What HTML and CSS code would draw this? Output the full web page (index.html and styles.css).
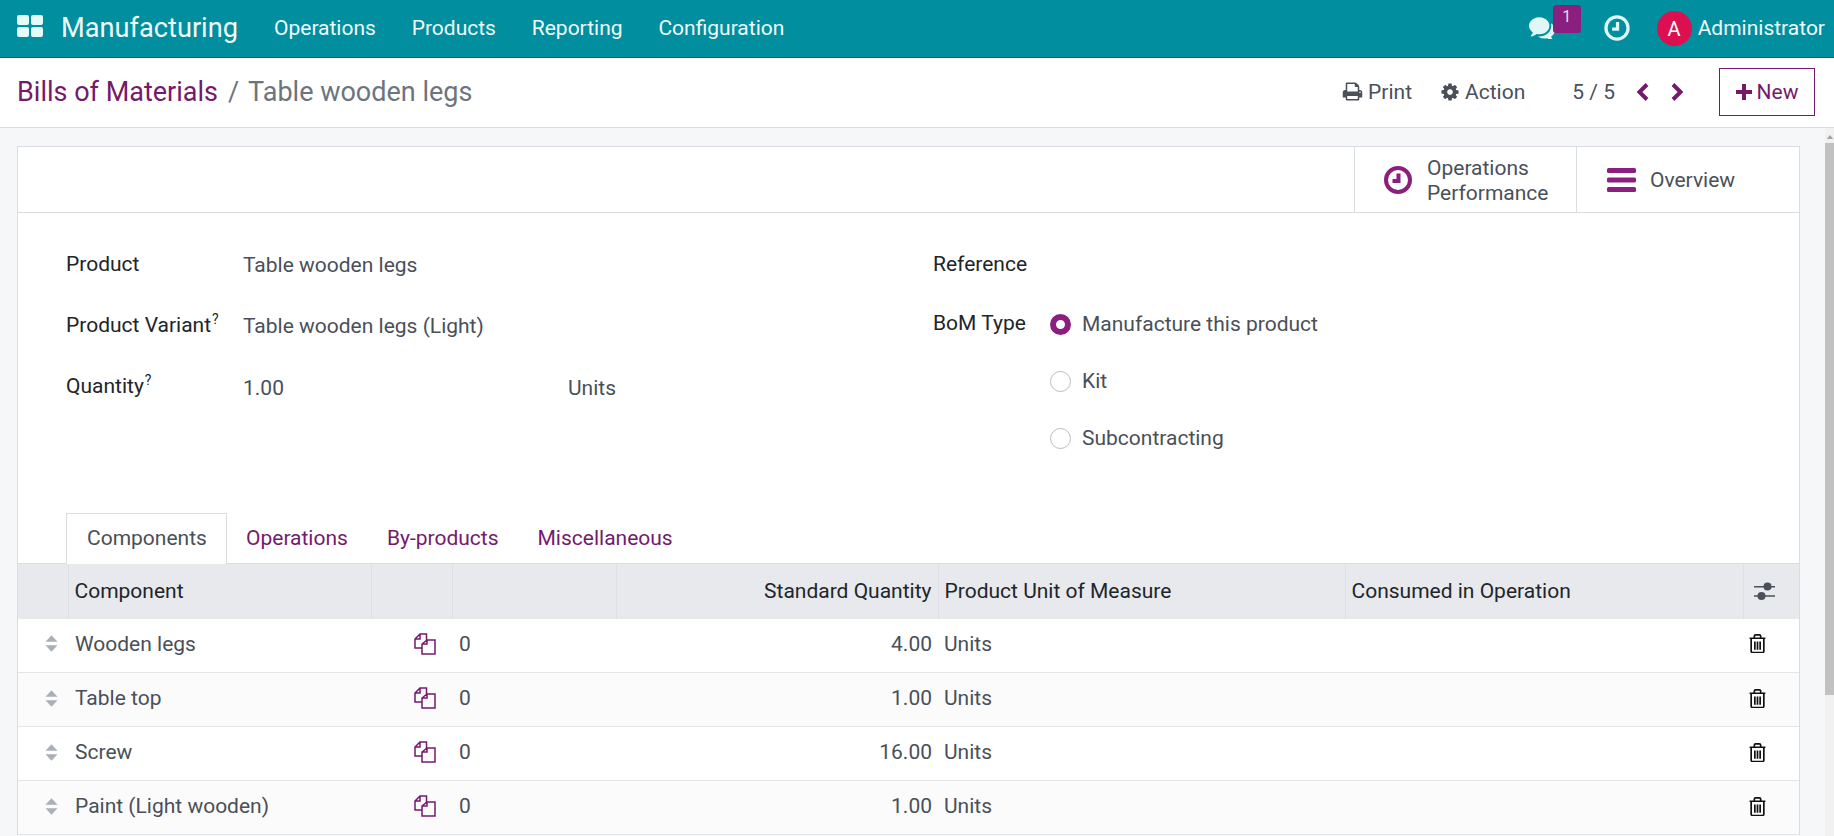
FILE: index.html
```html
<!DOCTYPE html>
<html lang="en">
<head>
<meta charset="utf-8">
<title>Manufacturing</title>
<link rel="stylesheet" href="styles.css">
</head>
<body>
<header class="navbar">
  <svg class="apps" viewBox="0 0 26 22"><rect x="0" y="0" width="12" height="10" rx="2"/><rect x="14" y="0" width="12" height="10" rx="2"/><rect x="0" y="12" width="12" height="10" rx="2"/><rect x="14" y="12" width="12" height="10" rx="2"/></svg>
  <span class="brand">Manufacturing</span>
  <nav class="menu"><span>Operations</span><span>Products</span><span>Reporting</span><span>Configuration</span></nav>
  <div class="systray">
    <span class="chat">
      <svg class="chat-icon" viewBox="0 240 1792 1320" preserveAspectRatio="none"><path d="M1408 768q0 139-94 257t-256.500 186.500-353.500 68.500q-86 0-176-16-124 88-278 128-36 9-86 16h-3q-11 0-20.500-8t-11.500-21q-1-3-1-6.500t.5-6.500 2-6l2.500-5 3.500-5.500 4-5 4.500-5 4-4.500q5-6 23-25t26-29.500 22.500-29 25-38.500 20.500-44q-124-72-195-177t-71-224q0-139 94-257t256.500-186.500 353.500-68.500 353.500 68.500 256.500 186.500 94 257zm384 256q0 120-71 224.500t-195 176.500q10 24 20.500 44t25 38.500 22.500 29 26 29.500 23 25q1 1 4 4.500t4.500 5 4 5 3.500 5.500l2.500 5 2 6 .5 6.500-1 6.500q-3 14-13 22t-22 7q-50-7-86-16-154-40-278-128-90 16-176 16-271 0-472-132 58 4 88 4 161 0 309-45t264-129q125-92 192-212t67-254q0-77-23-152 129 71 204 178t75 230z"/></svg>
      <span class="badge">1</span>
    </span>
    <svg class="nav-clock" viewBox="0 0 24 24"><circle cx="12" cy="12" r="10.200"/><path d="M12.500 6.500v6.500H7.500"/></svg>
    <span class="avatar">A</span>
    <span class="user">Administrator</span>
  </div>
</header>

<section class="control">
  <h1 class="crumbs"><a class="link">Bills of Materials</a><span class="sep">/</span><span class="current">Table wooden legs</span></h1>
  <div class="actions">
    <span class="action print"><svg class="ic-print" viewBox="0 0 1792 1792"><path d="M448 1536h896v-256h-896v256zm0-640h896v-384h-160q-40 0-68-28t-28-68v-160h-640v640zm1152 64q0-26-19-45t-45-19-45 19-19 45 19 45 45 19 45-19 19-45zm128 0v416q0 13-9.500 22.500t-22.500 9.500h-224v160q0 40-28 68t-68 28h-960q-40 0-68-28t-28-68v-160h-224q-13 0-22.500-9.500t-9.500-22.500v-416q0-79 56.500-135.500t135.500-56.500h64v-544q0-40 28-68t68-28h672q40 0 88 20t76 48l152 152q28 28 48 76t20 88v256h64q79 0 135.500 56.500t56.500 135.500z"/></svg>Print</span>
    <span class="action act"><svg class="ic-gear" viewBox="0 0 1792 1792"><path d="M1152 896q0-106-75-181t-181-75-181 75-75 181 75 181 181 75 181-75 75-181zm512-109v222q0 12-8 23t-20 13l-185 28q-19 54-39 91 35 50 107 138 10 12 10 25t-9 23q-27 37-99 108t-94 71q-12 0-26-9l-138-108q-44 23-91 38-16 136-29 186-7 28-36 28h-222q-14 0-24.500-8.500t-11.500-21.500l-28-184q-49-16-90-37l-141 107q-10 9-25 9-14 0-25-11-126-114-165-168-7-10-7-23 0-12 8-23 15-21 51-66.500t54-70.500q-27-50-41-99l-183-27q-13-2-21-12.500t-8-23.500v-222q0-12 8-23t19-13l186-28q14-46 39-92-40-57-107-138-10-12-10-24 0-10 9-23 26-36 98.500-107.500t94.500-71.500q13 0 26 10l138 107q44-23 91-38 16-136 29-186 7-28 36-28h222q14 0 24.500 8.500t11.500 21.500l28 184q49 16 90 37l142-107q9-9 24-9 13 0 25 10 129 119 165 170 7 8 7 22 0 12-8 23-15 21-51 66.500t-54 70.500q26 50 41 98l183 28q13 2 21 12.500t8 23.500z"/></svg>Action</span>
    <span class="pager">5 / 5</span>
    <svg class="chev first" viewBox="0 0 14 20"><path d="M11 2.500 3.500 10l7.500 7.500"/></svg>
    <svg class="chev second" viewBox="0 0 14 20"><path d="M3 2.500 10.500 10 3 17.500"/></svg>
    <button class="new" type="button"><svg class="ic-plus" viewBox="0 0 16 16"><path d="M6 0h4v6h6v4h-6v6H6v-6H0V6h6z"/></svg>New</button>
  </div>
</section>

<div class="body-row">
  <main class="content">
    <div class="sheet">
      <div class="stat-bar">
        <div class="stat stat-ops">
          <svg class="stat-clock" viewBox="0 0 28 28"><circle cx="14" cy="14" r="12"/><path d="M14.500 7.500v7.500H8.500"/></svg>
          <span class="stat-text">Operations<br>Performance</span>
        </div>
        <div class="stat stat-over">
          <svg class="stat-bars" viewBox="0 0 29 24"><rect y="0" width="29" height="5" rx="1.500"/><rect y="9.500" width="29" height="5" rx="1.500"/><rect y="19" width="29" height="5" rx="1.500"/></svg>
          <span class="stat-text">Overview</span>
        </div>
      </div>

      <div class="form">
        <div class="fcol fleft">
          <div class="frow r1"><span class="label">Product</span><span class="value">Table wooden legs</span></div>
          <div class="frow r2"><span class="label">Product Variant<sup>?</sup></span><span class="value">Table wooden legs (Light)</span></div>
          <div class="frow r3"><span class="label">Quantity<sup>?</sup></span><span class="value qty">1.00</span><span class="value">Units</span></div>
        </div>
        <div class="fcol fright">
          <div class="frow ref"><span class="label">Reference</span></div>
          <div class="frow bom">
            <span class="label">BoM Type</span>
            <div class="radios">
              <div class="radio"><span class="dot on"></span>Manufacture this product</div>
              <div class="radio"><span class="dot"></span>Kit</div>
              <div class="radio"><span class="dot"></span>Subcontracting</div>
            </div>
          </div>
        </div>
      </div>

      <div class="tabs">
        <span class="tab active">Components</span>
        <span class="tab">Operations</span>
        <span class="tab">By-products</span>
        <span class="tab">Miscellaneous</span>
      </div>

      <table class="lines">
        <colgroup>
          <col class="c-drag"><col class="c-name"><col class="c-copy"><col class="c-zero"><col class="c-qty"><col class="c-uom"><col class="c-op"><col class="c-end">
        </colgroup>
        <thead>
          <tr>
            <th></th><th>Component</th><th></th><th></th><th class="num">Standard Quantity</th><th>Product Unit of Measure</th><th>Consumed in Operation</th>
            <th class="end"><svg class="ic-sliders" viewBox="0 0 21 18"><path class="rail" d="M0 4.700h21M0 14h21"/><circle cx="13.500" cy="4.500" r="4"/><circle cx="7.500" cy="14" r="4"/></svg></th>
          </tr>
        </thead>
        <tbody>
          <tr>
            <td class="drag"><svg class="ic-drag" viewBox="0 0 14 18"><path d="M7 0l6.500 7H.5zM7 18l6.500-7H.5z"/></svg></td>
            <td class="pl">Wooden legs</td>
            <td class="copy"><svg class="ic-copy" viewBox="0 0 22 22"><path d="M8 15H1V6l5-5h6.500v6M6 1v5H1M13 7h8v14H8V11l5-4zM13 7v4H8"/></svg></td>
            <td class="pl">0</td><td class="num">4.00</td><td>Units</td><td></td>
            <td class="end"><svg class="ic-trash" viewBox="0 0 16 18"><path d="M.5 4h15M2 4v12.500A1.200 1.200 0 0 0 3.200 17.500h9.600A1.200 1.200 0 0 0 14 16.500V4M5 4V2a1.200 1.200 0 0 1 1.200-1.200h3.600A1.200 1.200 0 0 1 11 2v2M5.500 7v8M8 7v8M10.500 7v8"/></svg></td>
          </tr>
          <tr>
            <td class="drag"><svg class="ic-drag" viewBox="0 0 14 18"><path d="M7 0l6.500 7H.5zM7 18l6.500-7H.5z"/></svg></td>
            <td class="pl">Table top</td>
            <td class="copy"><svg class="ic-copy" viewBox="0 0 22 22"><path d="M8 15H1V6l5-5h6.500v6M6 1v5H1M13 7h8v14H8V11l5-4zM13 7v4H8"/></svg></td>
            <td class="pl">0</td><td class="num">1.00</td><td>Units</td><td></td>
            <td class="end"><svg class="ic-trash" viewBox="0 0 16 18"><path d="M.5 4h15M2 4v12.500A1.200 1.200 0 0 0 3.200 17.500h9.600A1.200 1.200 0 0 0 14 16.500V4M5 4V2a1.200 1.200 0 0 1 1.200-1.200h3.600A1.200 1.200 0 0 1 11 2v2M5.500 7v8M8 7v8M10.500 7v8"/></svg></td>
          </tr>
          <tr>
            <td class="drag"><svg class="ic-drag" viewBox="0 0 14 18"><path d="M7 0l6.500 7H.5zM7 18l6.500-7H.5z"/></svg></td>
            <td class="pl">Screw</td>
            <td class="copy"><svg class="ic-copy" viewBox="0 0 22 22"><path d="M8 15H1V6l5-5h6.500v6M6 1v5H1M13 7h8v14H8V11l5-4zM13 7v4H8"/></svg></td>
            <td class="pl">0</td><td class="num">16.00</td><td>Units</td><td></td>
            <td class="end"><svg class="ic-trash" viewBox="0 0 16 18"><path d="M.5 4h15M2 4v12.500A1.200 1.200 0 0 0 3.200 17.500h9.600A1.200 1.200 0 0 0 14 16.500V4M5 4V2a1.200 1.200 0 0 1 1.200-1.200h3.600A1.200 1.200 0 0 1 11 2v2M5.500 7v8M8 7v8M10.500 7v8"/></svg></td>
          </tr>
          <tr>
            <td class="drag"><svg class="ic-drag" viewBox="0 0 14 18"><path d="M7 0l6.500 7H.5zM7 18l6.500-7H.5z"/></svg></td>
            <td class="pl">Paint (Light wooden)</td>
            <td class="copy"><svg class="ic-copy" viewBox="0 0 22 22"><path d="M8 15H1V6l5-5h6.500v6M6 1v5H1M13 7h8v14H8V11l5-4zM13 7v4H8"/></svg></td>
            <td class="pl">0</td><td class="num">1.00</td><td>Units</td><td></td>
            <td class="end"><svg class="ic-trash" viewBox="0 0 16 18"><path d="M.5 4h15M2 4v12.500A1.200 1.200 0 0 0 3.200 17.500h9.600A1.200 1.200 0 0 0 14 16.500V4M5 4V2a1.200 1.200 0 0 1 1.200-1.200h3.600A1.200 1.200 0 0 1 11 2v2M5.500 7v8M8 7v8M10.500 7v8"/></svg></td>
          </tr>
        </tbody>
      </table>
    </div>
  </main>
  <aside class="scrollbar">
    <svg class="sb-arrow" viewBox="0 0 10 6"><path d="M5 0l4 5H1z"/></svg>
    <div class="sb-thumb"></div>
  </aside>
</div>
</body>
</html>
```
FILE: styles.css
```css
* { box-sizing: border-box; }
html, body { height: 100%; }
body {
  margin: 0;
  height: 836px;
  overflow: hidden;
  display: flex;
  flex-direction: column;
  font-family: Roboto, "Liberation Sans", sans-serif;
  font-size: 21px;
  color: #4a4f59;
  background: #f6f7f9;
}
svg { display: block; flex: none; }

/* navbar */
.navbar {
  height: 58px;
  flex: none;
  display: flex;
  align-items: center;
  background: #018e9e;
  border-bottom: 1px solid #0b5f68;
  color: #f0fbfb;
  padding-left: 17px;
}
.apps { width: 26px; height: 22px; fill: #e4fafb; margin-top: -5px; }
.brand { font-size: 27.200px; margin-left: 18px; width: 176px; white-space: nowrap; margin-top: -2px; }
.menu { display: flex; gap: 35.800px; margin-left: 37px; margin-top: -2px; }
.systray { margin-left: auto; display: flex; align-items: center; padding-right: 9px; margin-top: -1px; }
.chat { position: relative; width: 52px; height: 46px; margin-right: 24px; padding-left: 1px; display: flex; align-items: center; }
.chat-icon { width: 26px; height: 22px; fill: #dff7f7; }
.badge {
  position: absolute; left: 25px; top: 0;
  width: 28px; height: 28px;
  background: #8a1f80; color: #e8d6e6;
  border-radius: 3px;
  font-size: 16px; text-align: center; line-height: 24px;
}
.nav-clock { width: 26px; height: 26px; fill: none; stroke: #dff7f7; stroke-width: 3px; margin-right: 27px; }
.avatar {
  width: 35px; height: 35px; border-radius: 50%;
  background: #dc0f50; color: #fff;
  font-size: 20px; text-align: center; line-height: 36px;
  margin-right: 6px;
}

/* control panel */
.control {
  height: 70px;
  flex: none;
  display: flex;
  align-items: center;
  background: #fff;
  border-bottom: 1px solid #d9dce1;
  padding: 0 19px 2px 17px;
}
.crumbs { margin: 0; font-size: 27px; font-weight: 400; display: flex; }
.link { color: #741a6d; }
.sep { color: #6c757d; margin: 0 9px 0 10px; }
.current { color: #6c757d; }
.actions { margin-left: auto; display: flex; align-items: center; }
.action { display: flex; align-items: center; color: #4a4f59; }
.ic-print { width: 21px; height: 21px; fill: #4a4f59; margin-right: 5px; }
.ic-gear { width: 20px; height: 20px; fill: #4a4f59; margin-right: 5px; }
.act { margin-left: 28px; }
.pager { margin-left: 47px; }
.chev { width: 14px; height: 20px; fill: none; stroke: #741a6d; stroke-width: 4px; }
.first { margin-left: 21px; }
.second { margin-left: 20px; }
.new {
  margin-left: 35px;
  width: 96px; height: 48px;
  display: flex; align-items: center; justify-content: center;
  background: #fff;
  border: 1px solid #741a6d;
  border-radius: 0;
  color: #741a6d;
  font: inherit;
  padding: 0;
}
.ic-plus { width: 16px; height: 16px; fill: #741a6d; margin-right: 5px; }

/* body */
.body-row { flex: 1; min-height: 0; display: flex; }
.content { flex: 1; min-width: 0; overflow: hidden; padding: 18px 25px 0 17px; }
.scrollbar { width: 9px; flex: none; background: #f1f1f1; display: flex; flex-direction: column; align-items: center; padding-top: 7px; }
.sb-arrow { width: 8px; height: 5px; fill: #a3a3a3; margin-bottom: 3px; }
.sb-thumb { width: 100%; height: 552px; background: #c1c1c1; }

.sheet { background: #fff; border: 1px solid #d9dce1; border-bottom: 0; }

/* button box */
.stat-bar { height: 66px; display: flex; justify-content: flex-end; border-bottom: 1px solid #d9dce1; }
.stat { display: flex; align-items: center; border-left: 1px solid #d9dce1; height: 66px; line-height: 25px; }
.stat-ops { width: 222px; padding-left: 29px; gap: 15px; }
.stat-ops .stat-text { margin-top: 2px; }
.stat-over { width: 223px; padding-left: 30px; gap: 14px; }
.stat-clock { width: 28px; height: 28px; fill: none; stroke: #8a1f80; stroke-width: 4px; }
.stat-bars { width: 29px; height: 24px; fill: #8a1f80; }

/* form */
.form { display: flex; padding: 38px 0 0 48px; height: 300px; }
.fcol { display: flex; flex-direction: column; }
.fleft { width: 867px; }
.frow { display: flex; line-height: 26px; }
.label { color: #212529; }
.fleft .label { width: 177px; }
.r2 { margin-top: 34px; }
.r3 { margin-top: 34px; }
.value { margin-top: 1px; white-space: nowrap; }
.r3 .value { margin-top: 2px; }
.qty { width: 325px; }
sup { font-size: 14px; line-height: 0; vertical-align: 8px; margin-left: 1px; }
.bom { margin-top: 33px; }
.bom .label { width: 117px; }
.radios { display: flex; flex-direction: column; gap: 31px; margin-top: 1px; }
.radio { display: flex; align-items: center; gap: 11px; height: 26px; }
.dot { width: 21px; height: 21px; border-radius: 50%; border: 1px solid #b9bcc0; background: #fff; margin-top: 1px; }
.dot.on { border: 6px solid #8a1f80; }

/* tabs */
.tabs { display: flex; padding-left: 48px; height: 50px; color: #741a6d; }
.tab { padding: 0 19px; line-height: 49px; border: 1px solid transparent; border-bottom: 0; margin-right: -1px; white-space: nowrap; }
.tab.active { padding: 0 20px; color: #4a4f59; border-color: #d9dce1; background: #fff; height: 51px; width: 161px; position: relative; z-index: 1; }

/* table */
.lines { width: 100%; table-layout: fixed; border-collapse: collapse; }
.c-drag { width: 50px; } .c-name { width: 303px; } .c-copy { width: 81px; } .c-zero { width: 164px; }
.c-qty { width: 322px; } .c-uom { width: 407px; } .c-op { width: 398px; } .c-end { width: 56px; }
.lines th {
  height: 55px; background: #e7e9ed; color: #212529; font-weight: 400; text-align: left;
  padding: 0 6px; border-left: 1px solid #dcdfe3; border-top: 1px solid #d9dce1; white-space: nowrap;
}
.lines th:first-child { border-left: 0; }
.lines td { height: 54px; padding: 0 6px 3px; border-bottom: 1px solid #e3e5e8; white-space: nowrap; }
.lines tbody tr:nth-child(even) { background: #fbfbfb; }
.lines .num { text-align: right; }
.lines .pl { padding-left: 7px; }
.lines .drag { padding-left: 27px; }
.lines .copy { padding-left: 43px; }
.ic-drag { width: 13px; height: 17px; fill: #aab0b8; }
.ic-copy { width: 22px; height: 22px; fill: none; stroke: #741a6d; stroke-width: 1.500px; }
.lines .end { padding: 0 0 3px 6px; }
.lines th.end { padding: 0 0 0 7px; }
.ic-trash { width: 17px; height: 19px; fill: none; stroke: #111; stroke-width: 1.600px; }
.ic-sliders { width: 21px; height: 18px; fill: #4a4f59; margin-left: 3px; }
.ic-sliders .rail { fill: none; stroke: #4a4f59; stroke-width: 1.500px; }
```
